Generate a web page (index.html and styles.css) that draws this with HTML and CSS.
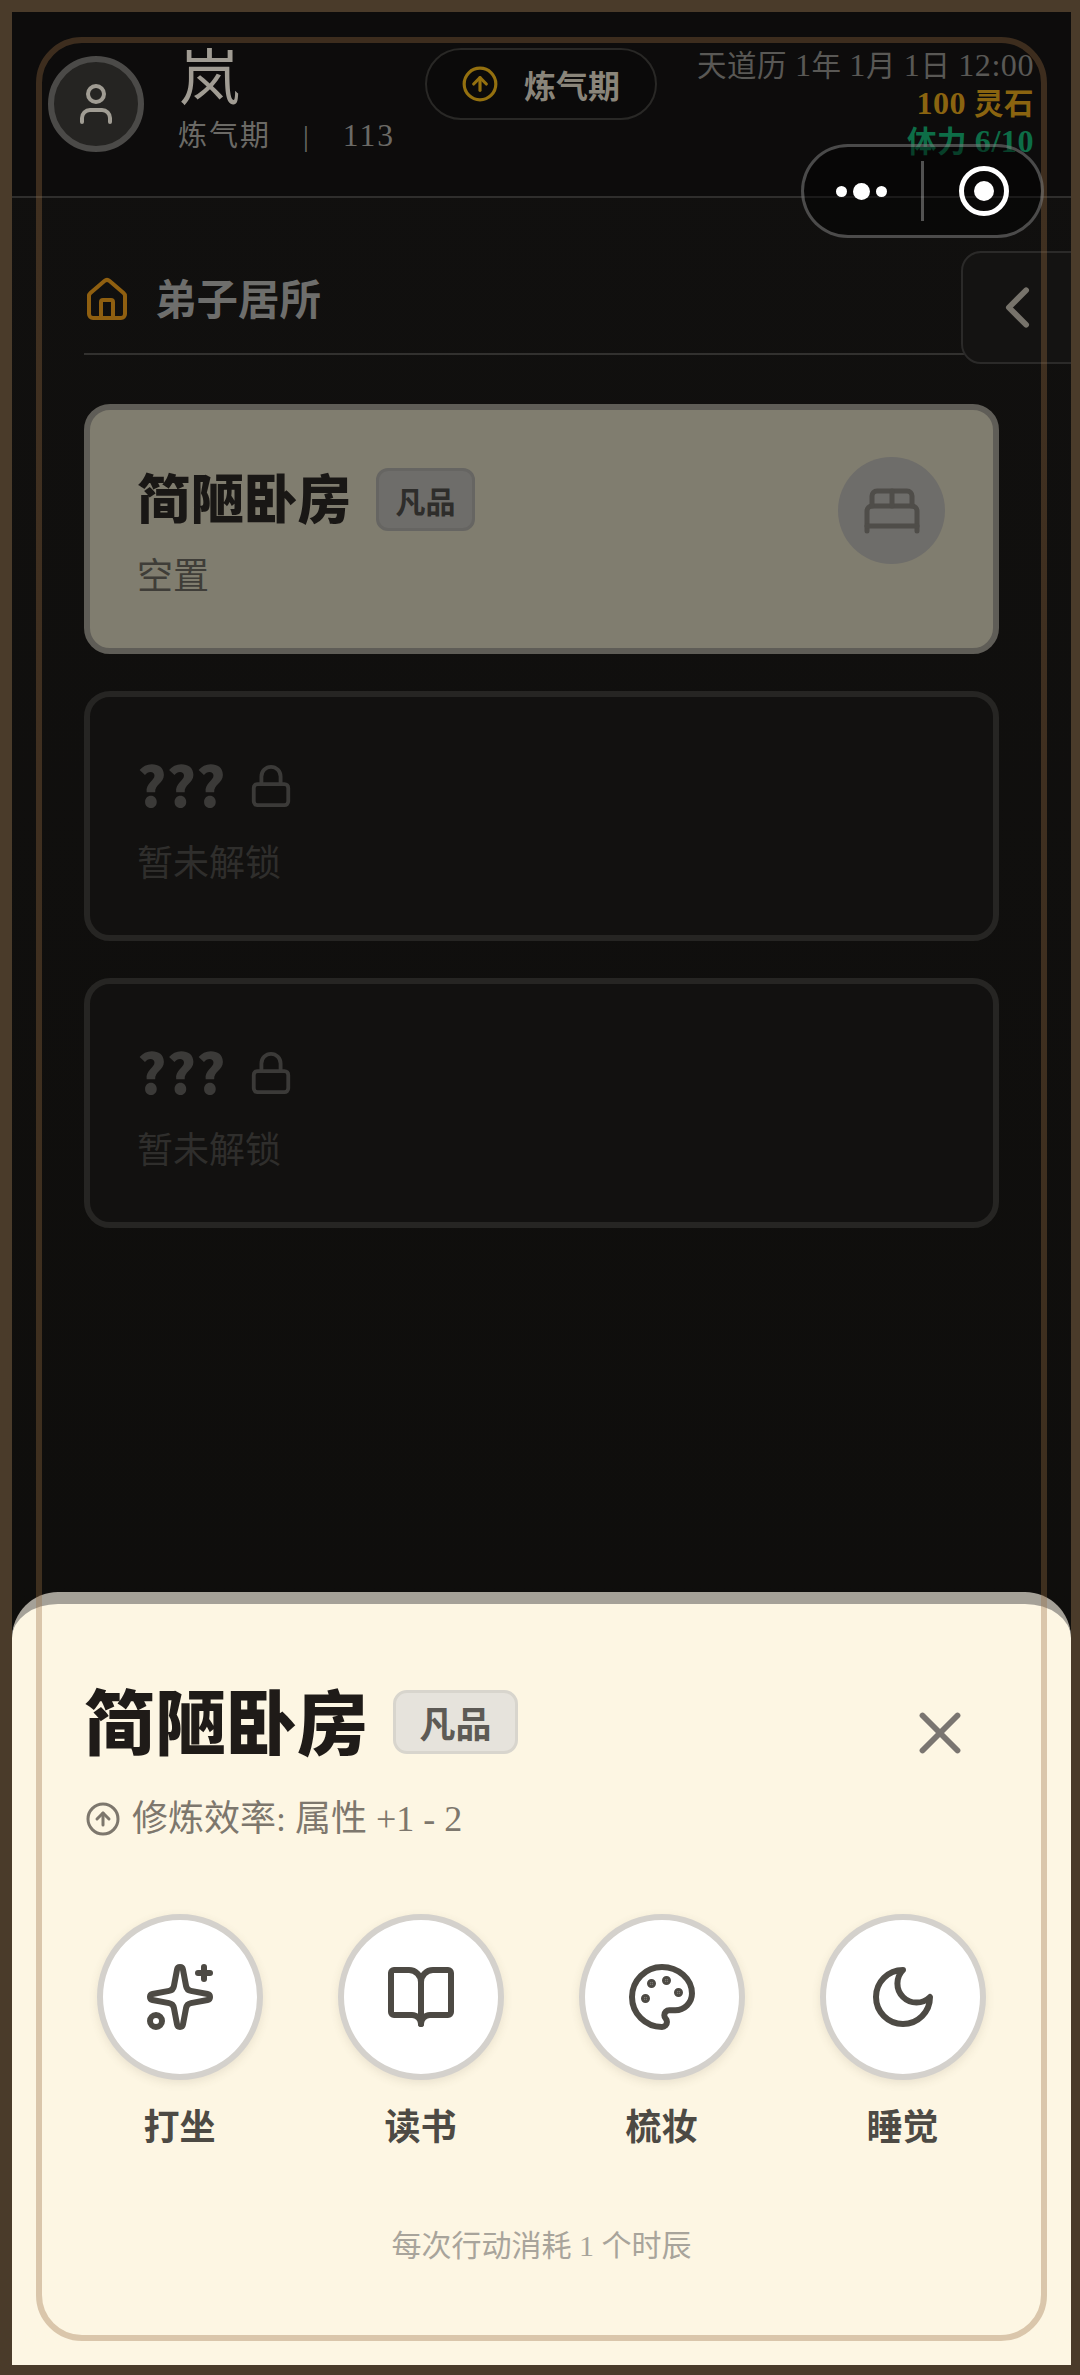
FILE: index.html
```html
<!DOCTYPE html>
<html lang="zh-CN">
<head>
<meta charset="utf-8">
<title>弟子居所</title>
<link rel="stylesheet" href="styles.css">
</head>
<body>
<svg class="sprite" width="0" height="0" aria-hidden="true">
  <symbol id="i-up" viewBox="0 0 24 24"><circle cx="12" cy="12" r="10"/><path d="m16 12-4-4-4 4"/><path d="M12 16V8"/></symbol>
  <symbol id="i-lock" viewBox="0 0 24 24"><rect width="18" height="11" x="3" y="11" rx="2" ry="2"/><path d="M7 11V7a5 5 0 0 1 10 0v4"/></symbol>
</svg>
<div class="screen">
  <header class="topbar">
    <div class="avatar">
      <svg class="icon avatar-icon" viewBox="0 0 24 24"><path d="M19 21v-2a4 4 0 0 0-4-4H9a4 4 0 0 0-4 4v2"/><circle cx="12" cy="7" r="4"/></svg>
    </div>
    <div class="identity">
      <div class="name">岚</div>
      <div class="meta"><span>炼气期</span><span class="meta-sep">|</span><span class="num">113</span></div>
    </div>
    <div class="realm">
      <svg class="icon realm-icon"><use href="#i-up"/></svg>
      <span>炼气期</span>
    </div>
    <div class="stats">
      <div class="date">天道历 <span class="num">1</span>年 <span class="num">1</span>月 <span class="num">1</span>日 <span class="num">12:00</span></div>
      <div class="stones"><span class="num">100</span> 灵石</div>
      <div class="stamina">体力 <span class="num">6/10</span></div>
    </div>
  </header>

  <main class="content">
    <div class="section-head">
      <svg class="icon home-icon" viewBox="0 0 24 24"><path d="M15 21v-8a1 1 0 0 0-1-1h-4a1 1 0 0 0-1 1v8"/><path d="M3 10a2 2 0 0 1 .709-1.528l7-5.999a2 2 0 0 1 2.582 0l7 5.999A2 2 0 0 1 21 10v9a2 2 0 0 1-2 2H5a2 2 0 0 1-2-2z"/></svg>
      <h2>弟子居所</h2>
    </div>
    <div class="rooms">
      <article class="room room-open">
        <div class="room-text">
          <div class="room-title"><h3>简陋卧房</h3><span class="grade">凡品</span></div>
          <p>空置</p>
        </div>
        <div class="bed">
          <svg class="icon bed-icon" viewBox="0 0 24 24"><path d="M2 20v-8a2 2 0 0 1 2-2h16a2 2 0 0 1 2 2v8"/><path d="M4 10V6a2 2 0 0 1 2-2h12a2 2 0 0 1 2 2v4"/><path d="M12 4v6"/><path d="M2 18h20"/></svg>
        </div>
      </article>
      <article class="room room-locked">
        <div class="room-text">
          <div class="room-title"><h3>???</h3><svg class="icon lock-icon"><use href="#i-lock"/></svg></div>
          <p>暂未解锁</p>
        </div>
      </article>
      <article class="room room-locked">
        <div class="room-text">
          <div class="room-title"><h3>???</h3><svg class="icon lock-icon"><use href="#i-lock"/></svg></div>
          <p>暂未解锁</p>
        </div>
      </article>
    </div>
  </main>

  <button class="side-handle" type="button" aria-label="展开">
    <svg class="icon handle-icon" viewBox="0 0 24 24"><path d="m15 18-6-6 6-6"/></svg>
  </button>

  <section class="sheet">
    <div class="sheet-head">
      <h1>简陋卧房</h1>
      <span class="sheet-grade">凡品</span>
      <svg class="icon close-icon" viewBox="0 0 24 24"><path d="M18 6 6 18"/><path d="m6 6 12 12"/></svg>
    </div>
    <div class="effect">
      <svg class="icon effect-icon"><use href="#i-up"/></svg>
      <span>修炼效率: 属性 +1 - 2</span>
    </div>
    <div class="actions">
      <div class="action">
        <div class="action-btn"><svg class="icon action-icon" viewBox="0 0 24 24"><path d="M11.017 2.814a1 1 0 0 1 1.966 0l1.051 5.558a2 2 0 0 0 1.594 1.594l5.558 1.051a1 1 0 0 1 0 1.966l-5.558 1.051a2 2 0 0 0-1.594 1.594l-1.051 5.558a1 1 0 0 1-1.966 0l-1.051-5.558a2 2 0 0 0-1.594-1.594l-5.558-1.051a1 1 0 0 1 0-1.966l5.558-1.051a2 2 0 0 0 1.594-1.594z"/><path d="M20 2v4"/><path d="M22 4h-4"/><circle cx="4" cy="20" r="2"/></svg></div>
        <span>打坐</span>
      </div>
      <div class="action">
        <div class="action-btn"><svg class="icon action-icon" viewBox="0 0 24 24"><path d="M12 7v14"/><path d="M3 18a1 1 0 0 1-1-1V4a1 1 0 0 1 1-1h5a4 4 0 0 1 4 4 4 4 0 0 1 4-4h5a1 1 0 0 1 1 1v13a1 1 0 0 1-1 1h-6a3 3 0 0 0-3 3 3 3 0 0 0-3-3z"/></svg></div>
        <span>读书</span>
      </div>
      <div class="action">
        <div class="action-btn"><svg class="icon action-icon" viewBox="0 0 24 24"><circle class="dot" cx="13.5" cy="6.5" r=".5"/><circle class="dot" cx="17.5" cy="10.5" r=".5"/><circle class="dot" cx="8.5" cy="7.5" r=".5"/><circle class="dot" cx="6.5" cy="12.5" r=".5"/><path d="M12 2C6.5 2 2 6.5 2 12s4.5 10 10 10c.926 0 1.648-.746 1.648-1.688 0-.437-.18-.835-.437-1.125-.29-.289-.438-.652-.438-1.125a1.64 1.64 0 0 1 1.668-1.668h1.996c3.051 0 5.555-2.503 5.555-5.554C21.965 6.012 17.461 2 12 2z"/></svg></div>
        <span>梳妆</span>
      </div>
      <div class="action">
        <div class="action-btn"><svg class="icon action-icon" viewBox="0 0 24 24"><path d="M12 3a6 6 0 0 0 9 9 9 9 0 1 1-9-9Z"/></svg></div>
        <span>睡觉</span>
      </div>
    </div>
    <p class="cost">每次行动消耗 1 个时辰</p>
  </section>

  <div class="frame-ring"></div>

  <div class="capsule">
    <div class="capsule-dots"><i></i><b></b><i></i></div>
    <div class="capsule-line"></div>
    <div class="capsule-target"><i></i></div>
  </div>
</div>
</body>
</html>
```
FILE: styles.css
```css
* { box-sizing: border-box; }
html, body { margin: 0; padding: 0; }
body {
  width: 1080px;
  height: 2375px;
  overflow: hidden;
  background: #4a3b2a;
  padding: 12px 9px 10px 12px;
  font-family: "Liberation Serif", "Noto Sans CJK SC", serif;
}
h1, h2, h3, p { margin: 0; }
.sprite { position: absolute; }
.icon {
  display: block;
  fill: none;
  stroke: currentColor;
  stroke-width: 2;
  stroke-linecap: round;
  stroke-linejoin: round;
  flex: none;
}
.screen {
  position: relative;
  width: 1059px;
  height: 2353px;
  overflow: hidden;
  background: linear-gradient(#11100f, #0e0d0b);
}

/* top bar */
.topbar {
  display: flex;
  align-items: flex-start;
  height: 186px;
  padding: 36px 37px 0 36px;
  border-bottom: 2px solid #2f2e2d;
  background: #0d0c0c;
}
.avatar {
  width: 96px;
  height: 96px;
  margin-top: 8px;
  border: 6px solid #4b4a48;
  border-radius: 50%;
  background: #252422;
  display: flex;
  align-items: center;
  justify-content: center;
  color: #a09c93;
  flex: none;
}
.avatar-icon { width: 48px; height: 48px; }
.identity { width: 281px; padding-left: 34px; flex: none; }
.name {
  font-size: 61px;
  line-height: 64px;
  margin-top: -6px;
  color: #a09c93;
  font-family: "Noto Sans CJK SC", sans-serif;
  font-weight: 400;
  margin-left: 1px;
}
.meta {
  display: flex;
  align-items: center;
  gap: 32px;
  font-size: 29px;
  line-height: 40px;
  letter-spacing: 2px;
  color: #6b6a66;
  margin-top: 10px;
}
.num { font-size: 1.09em; }
.meta-sep { font-size: 29px; }
.realm {
  display: flex;
  align-items: center;
  gap: 25px;
  width: 232px;
  height: 72px;
  padding-left: 34px;
  border: 2px solid #292826;
  border-radius: 36px;
  background: #0b0a0a;
  color: #8a857a;
  font-family: "Noto Sans CJK SC", sans-serif;
  font-size: 32px;
  font-weight: 700;
  flex: none;
}
.realm-icon { width: 38px; height: 38px; color: #94700f; }
.stats { margin-left: auto; margin-top: -2px; text-align: right; letter-spacing: .5px; }
.date { font-size: 29.5px; line-height: 38px; color: #595855; }
.stones { font-size: 29.5px; line-height: 37px; font-weight: 700; color: #8a6410; }
.stamina { font-size: 29.5px; line-height: 36px; font-weight: 700; color: #0d6d47; }

/* rooms */
.content { padding: 0 72px; }
.section-head {
  display: flex;
  align-items: center;
  gap: 24px;
  height: 94px;
  margin-top: 63px;
  padding: 0 0 14px 0;
  border-bottom: 2px solid #32312f;
}
.section-head h2 {
  font-family: "Noto Sans CJK SC", sans-serif;
  font-size: 41.5px;
  line-height: 52px;
  margin-top: -6px;
  font-weight: 700;
  color: #6e6e6c;
}
.home-icon { width: 48px; height: 48px; color: #8f5f10; margin-left: -1px; }
.rooms {
  display: flex;
  flex-direction: column;
  gap: 37px;
  margin-top: 49px;
}
.room {
  display: flex;
  align-items: flex-start;
  justify-content: space-between;
  height: 250px;
  padding: 51px 48px 0 47px;
  border: 6px solid;
  border-radius: 26px;
}
.room-open { background: #807d6f; border-color: #5f5d57; }
.room-locked { background: #121110; border-color: #262523; }
.room-title { display: flex; align-items: center; height: 70px; }
.room h3 {
  font-family: "Noto Sans CJK SC", sans-serif;
  font-size: 53.5px;
  line-height: 70px;
  font-weight: 900;
  color: #191715;
}
.room p {
  font-family: "Noto Sans CJK SC", sans-serif;
  font-size: 36px;
  line-height: 46px;
  margin-top: 19px;
  color: #3f3d38;
}
.room-locked h3 { color: #3b3a38; font-size: 55px; }
.room-locked p { color: #2f2e2c; }
.grade {
  margin-left: 25px;
  width: 99px;
  height: 63px;
  margin-top: 7px;
  border: 3px solid #666562;
  border-radius: 12px;
  background: #6e6d6a;
  color: #2e2d2b;
  font-family: "Noto Sans CJK SC", sans-serif;
  font-size: 30px;
  font-weight: 700;
  display: flex;
  align-items: center;
  justify-content: center;
}
.bed {
  width: 107px;
  height: 107px;
  margin-top: -4px;
  border-radius: 50%;
  background: #6e6d6a;
  color: #4f4d49;
  display: flex;
  align-items: center;
  justify-content: center;
}
.bed-icon { width: 60px; height: 60px; }
.lock-icon { width: 46px; height: 46px; margin-left: 23px; margin-top: 6px; color: #3b3a38; }

/* over-content pieces */
.side-handle {
  position: absolute;
  top: 239px;
  left: 949px;
  width: 120px;
  height: 113px;
  padding: 0 0 0 20px;
  border: 2px solid #2b2a29;
  border-radius: 20px 0 0 20px;
  background: #141312;
  color: #77736b;
  display: flex;
  align-items: center;
}
.handle-icon { width: 69px; height: 69px; }

.sheet {
  position: absolute;
  left: 0;
  right: 0;
  bottom: 0;
  height: 773px;
  border-top: 12px solid #a5a198;
  border-radius: 46px 46px 0 0;
  background: #fdf6e3;
  padding: 73px 0 0;
}
.sheet-head {
  display: flex;
  align-items: center;
  height: 90px;
  padding: 0 96px 0 72px;
}
.sheet-head h1 {
  font-family: "Noto Sans CJK SC", sans-serif;
  font-size: 71px;
  line-height: 90px;
  margin-bottom: 8px;
  font-weight: 900;
  color: #1f1b18;
}
.sheet-grade {
  margin-left: 25px;
  width: 125px;
  height: 64px;
  border: 3px solid #d8d5cd;
  border-radius: 14px;
  background: #e6e3dc;
  color: #5d5a55;
  font-family: "Noto Sans CJK SC", sans-serif;
  font-size: 36px;
  font-weight: 700;
  display: flex;
  align-items: center;
  justify-content: center;
}
.close-icon {
  width: 70px;
  height: 70px;
  margin: 22px 0 0 auto;
  color: #7a7570;
}
.effect {
  display: flex;
  align-items: center;
  gap: 11px;
  margin-top: 28px;
  padding-left: 73px;
  color: #7d776d;
  font-size: 36px;
  line-height: 48px;
}
.effect-icon { width: 36px; height: 36px; }
.actions {
  display: grid;
  grid-template-columns: repeat(4, 241px);
  margin-top: 71px;
  padding-left: 47px;
}
.action {
  display: flex;
  flex-direction: column;
  align-items: center;
  gap: 20px;
  color: #4d4a44;
  font-family: "Noto Sans CJK SC", sans-serif;
  font-size: 36px;
  line-height: 48px;
  font-weight: 700;
}
.action-btn {
  width: 166px;
  height: 166px;
  border: 6px solid #d4d1cc;
  border-radius: 50%;
  background: #fff;
  box-shadow: 0 3px 10px rgba(90, 80, 60, .12);
  display: flex;
  align-items: center;
  justify-content: center;
}
.action-icon { width: 72px; height: 72px; stroke-width: 2; }
.dot { fill: currentColor; }
.cost {
  margin-top: 78px;
  text-align: center;
  color: #a8a49b;
  font-size: 30px;
  line-height: 40px;
}

.frame-ring {
  position: absolute;
  left: 24px;
  top: 25px;
  width: 1011px;
  height: 2304px;
  border: 6px solid rgba(152, 108, 65, .35);
  border-radius: 46px;
  pointer-events: none;
}

.capsule {
  position: absolute;
  left: 789px;
  top: 132px;
  width: 243px;
  height: 94px;
  border: 3px solid rgba(255, 255, 255, .27);
  border-radius: 47px;
  background: rgba(0, 0, 0, .42);
  display: flex;
  align-items: center;
}
.capsule-dots {
  display: flex;
  align-items: center;
  gap: 6px;
  margin-left: 32px;
  width: 85px;
}
.capsule-dots i { width: 11px; height: 11px; border-radius: 50%; background: #fff; }
.capsule-dots b { width: 17px; height: 17px; border-radius: 50%; background: #fff; }
.capsule-line { width: 3px; height: 60px; background: rgba(255, 255, 255, .3); }
.capsule-target {
  width: 50px;
  height: 50px;
  margin-left: 35px;
  border: 5px solid #fff;
  border-radius: 50%;
  display: flex;
  align-items: center;
  justify-content: center;
}
.capsule-target i { width: 20px; height: 20px; border-radius: 50%; background: #fff; }
```
